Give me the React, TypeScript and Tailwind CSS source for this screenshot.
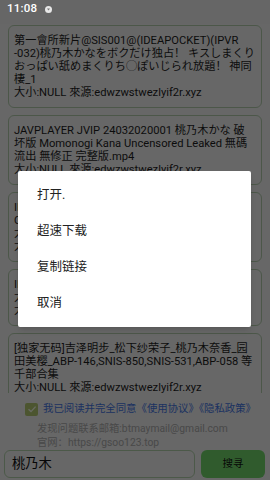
import React from 'react';

const cards: string[][] = [
  [
    '第一會所新片@SIS001@(IDEAPOCKET)(IPVR',
    '-032)桃乃木かなをボクだけ独占！ キスしまくり',
    'おっぱい舐めまくりち◯ぽいじられ放題！ 神同',
    '棲_1',
    '大小:NULL 來源:edwzwstwezlyif2r.xyz',
  ],
  [
    'JAVPLAYER JVIP 24032020001 桃乃木かな 破',
    '坏版 Momonogi Kana Uncensored Leaked 無碼',
    '流出 無修正 完整版.mp4',
    '大小:NULL 來源:edwzwstwezlyif2r.xyz',
  ],
  [
    'IPX-811 桃乃木かな 超高画質 無修正版 4K',
    'Complete Edition 完整版.mp4 流出',
    '大容量合集 中文字幕',
    '大小:NULL 來源:edwzwstwezlyif2r.xyz',
  ],
  [
    'IPX-516 桃乃木かな 中文字幕 無碼破解版',
    '大学生 完整版.mp4',
    '大小:NULL 來源:edwzwstwezlyif2r.xyz',
  ],
  [
    '[独家无码]吉泽明步_松下纱荣子_桃乃木奈香_园',
    '田美樱_ABP-146,SNIS-850,SNIS-531,ABP-058 等',
    '千部合集',
    '大小:NULL 來源:edwzwstwezlyif2r.xyz',
  ],
];

const menu = ['打开.', '超速下载', '复制链接', '取消'];

const font = { fontFamily: 'Roboto, "Noto Sans CJK SC", sans-serif' };

export default function App() {
  return (
    <div className="relative w-[270px] h-[480px] overflow-hidden bg-[#e4e4e4] flex flex-col" style={font}>
      {/* status bar */}
      <div className="relative z-20 h-[24px] shrink-0 bg-[#666666] flex items-center pl-[7px] gap-[8px] pb-[6px]">
        <span className="text-white text-[11.5px] font-medium tracking-[0.2px]">11:08</span>
        <svg width="7" height="7" viewBox="0 0 7 7">
          <circle cx="3.5" cy="3.5" r="3.5" fill="#e8e8e8" />
          <path d="M2 2.6 L3.5 4.6 L5 2.6 Z" fill="#777" />
        </svg>
      </div>

      {/* results list */}
      <div className="h-[369px] shrink-0 overflow-hidden px-2 pt-[1px] flex flex-col gap-[7px]">
        {cards.map((lines, i) => (
          <div key={i} className="shrink-0 border border-[#a9c2a3] rounded-[6px] pl-[5px] py-[8px] text-[#1c1c1c] text-[11.2px] leading-[13px]">
            {lines.map((l, j) => (
              <div key={j} className="whitespace-nowrap">{l}</div>
            ))}
          </div>
        ))}
      </div>

      {/* footer */}
      <div className="flex items-center pl-[25px] mt-[9px] h-[14px] gap-[5px]">
        <div className="w-[13px] h-[13px] rounded-[2px] bg-[#a9bd6a] flex items-center justify-center">
          <svg width="10" height="10" viewBox="0 0 10 10" fill="none">
            <path d="M1.5 5.2 L4 7.6 L8.6 2.6" stroke="#e6ebd8" strokeWidth="1.4" />
          </svg>
        </div>
        <span className="text-[10.4px] text-[#3f6fd6] whitespace-nowrap">我已阅读并完全同意《使用协议》《隐私政策》</span>
      </div>
      <div className="pl-[37px] mt-[6px] text-[10.3px] leading-[14px] text-[#a2a2a2]">
        <div>发现问题联系邮箱:btmaymail@gmail.com</div>
        <div>官网：https://gsoo123.top</div>
      </div>
      <div className="flex px-[4px] gap-[6px] pr-[5px]">
        <div className="flex-1 h-[28px] border border-[#a9c6a2] rounded-[6px] flex items-center pl-[7px] text-[13.3px] text-[#111]">
          桃乃木
        </div>
        <div className="w-[64px] h-[28px] rounded-[6px] bg-[#6acb64] flex items-center justify-center text-[10.5px] text-[#111]">
          搜寻
        </div>
      </div>

      {/* dim overlay + dialog */}
      <div className="absolute inset-x-0 top-[24px] bottom-0 z-10 bg-black/55">
        <div className="absolute left-[18px] top-[147px] w-[233px] h-[156px] bg-white rounded-[2px] shadow-md py-[6px]">
          {menu.map((m) => (
            <div key={m} className="h-[36px] flex items-center pl-[19px] text-[12.5px] text-[#222]">
              {m}
            </div>
          ))}
        </div>
      </div>
    </div>
  );
}
